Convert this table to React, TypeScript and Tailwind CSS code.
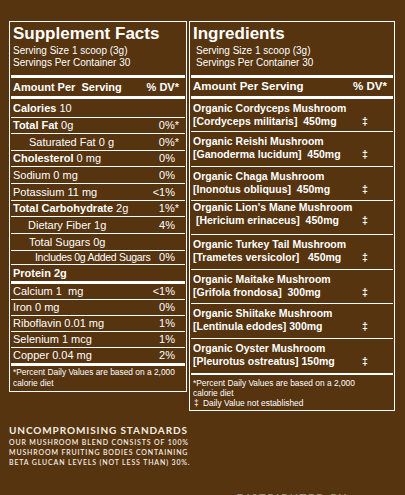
import React from "react";

const sans = "font-['Liberation_Sans',Arial,sans-serif]";

type Row = {
  b?: string;
  r?: string;
  dv?: string;
  star?: boolean;
  indent?: string;
  h: string;
  line?: boolean;
};

const macros: Row[] = [
  { b: "Calories", r: " 10", h: "h-[19px]", line: true },
  { b: "Total Fat", r: " 0g", dv: "0%", star: true, h: "h-[16px]", line: true },
  { r: "Saturated Fat 0 g", dv: "0%", star: true, indent: "pl-[16px]", h: "h-[17px]", line: true },
  { b: "Cholesterol", r: " 0 mg", dv: "0%", h: "h-[16px]", line: true },
  { r: "Sodium 0 mg", dv: "0%", h: "h-[17px]", line: true },
  { r: "Potassium 11 mg", dv: "<1%", h: "h-[17px]", line: true },
  { b: "Total Carbohydrate", r: " 2g", dv: "1%", star: true, h: "h-[16px]", line: true },
  { r: "Dietary Fiber 1g", dv: "4%", indent: "pl-[15px]", h: "h-[17px]", line: true },
  { r: "Total Sugars 0g", indent: "pl-[16px]", h: "h-[17px]", line: true },
  { r: "Includes 0g Added Sugars", dv: "0%", indent: "pl-[22px] text-[10.5px] tracking-[-0.3px]", h: "h-[14px]", line: true },
  { b: "Protein 2g", h: "h-[16px]" },
];

const micros: Row[] = [
  { r: "Calcium 1  mg", dv: "<1%", h: "h-[16px]", line: true },
  { r: "Iron 0 mg", dv: "0%", h: "h-[16px]", line: true },
  { r: "Riboflavin 0.01 mg", dv: "1%", h: "h-[16px]", line: true },
  { r: "Selenium 1 mcg", dv: "1%", h: "h-[16px]", line: true },
  { r: "Copper 0.04 mg", dv: "2%", h: "h-[15px]" },
];

const ingredients = [
  { a: "Organic Cordyceps Mushroom", b: "[Cordyceps militaris]  450mg", h: "h-[33px]", pt: "pt-[3px]" },
  { a: "Organic Reishi Mushroom", b: "[Ganoderma lucidum]  450mg", h: "h-[35px]", pt: "pt-[3px]" },
  { a: "Organic Chaga Mushroom", b: "[Inonotus obliquus]  450mg", h: "h-[34px]", pt: "pt-[3px]" },
  { a: "Organic Lion's Mane Mushroom", b: " [Hericium erinaceus]  450mg", h: "h-[34px]", pt: "pt-[0px]" },
  { a: "Organic Turkey Tail Mushroom", b: "[Trametes versicolor]   450mg", h: "h-[35px]", pt: "pt-[3px]" },
  { a: "Organic Maitake Mushroom", b: "[Grifola frondosa]  300mg", h: "h-[34px]", pt: "pt-[3px]" },
  { a: "Organic Shiitake Mushroom", b: "[Lentinula edodes] 300mg", h: "h-[35px]", pt: "pt-[3px]" },
  { a: "Organic Oyster Mushroom", b: "[Pleurotus ostreatus] 150mg", h: "h-[34px]", pt: "pt-[3px]", last: true },
];

const FactRow = ({ row }: { row: Row }) => (
  <div
    className={`flex items-center justify-between pl-[2px] pr-[10px] text-[11px] ${row.h} ${
      row.line ? "border-b border-white" : ""
    }`}
  >
    <span className={`whitespace-pre ${row.indent ?? ""}`}>
      {row.b && <span className="font-bold">{row.b}</span>}
      {row.r}
    </span>
    <span className="whitespace-nowrap">
      {row.dv}
      {row.star && <span className="-mr-[4px]">*</span>}
    </span>
  </div>
);

const Header = ({ title, right }: { title: string; right?: boolean }) => (
  <>
    <div className="px-[2px] text-[17px] font-bold leading-[22px]">{title}</div>
    <div className={`text-[10px] leading-[12px] ${right ? "px-[5px]" : "px-[2px]"}`}>
      <div>Serving Size 1 scoop (3g)</div>
      <div>Servings Per Container 30</div>
    </div>
    <div className="mt-[6px] h-[3px] bg-white" />
    <div
      className={`flex h-[18px] items-center justify-between whitespace-nowrap pl-[2px] font-bold ${
        right ? "pr-[6px] text-[11.5px]" : "pr-[10px] text-[11px]"
      }`}
    >
      <span>{right ? "Amount Per Serving" : "Amount Per\u00a0 Serving"}</span>
      <span className="whitespace-nowrap">
        % DV{right ? "*" : <span className="-mr-[4px]">*</span>}
      </span>
    </div>
    <div className="h-[3px] bg-white" />
  </>
);

export default function App() {
  return (
    <div className={`h-[495px] w-[405px] overflow-hidden bg-[#55340f] pt-[21px] text-white ${sans}`}>
      <div className="flex items-start">
        <div className="ml-[9px] w-[178px]">
          <div className="border border-white p-[1px]">
            <Header title="Supplement Facts" />
            {macros.map((r, i) => (
              <FactRow key={i} row={r} />
            ))}
            <div className="h-[3px] bg-white" />
            {micros.map((r, i) => (
              <FactRow key={i} row={r} />
            ))}
            <div className="h-[3px] bg-white" />
            <div className="px-[2px] pb-[1px] pt-[1px] text-[8.4px] leading-[11px]">
              <div>*Percent Daily Values are based on a 2,000</div>
              <div>calorie diet</div>
            </div>
          </div>

          <div className="mt-[32px] whitespace-nowrap font-['Lato',sans-serif] text-[#f3ece2]">
            <div className="text-[10px] font-bold leading-[12px] tracking-[0.09em]">
              UNCOMPROMISING STANDARDS
            </div>
            <div className="mt-[1px] text-[7px] font-semibold leading-[10px] tracking-[0.12em]">
              <div>OUR MUSHROOM BLEND CONSISTS OF 100%</div>
              <div>MUSHROOM FRUITING BODIES CONTAINING</div>
              <div>BETA GLUCAN LEVELS (NOT LESS THAN) 30%.</div>
            </div>
          </div>
        </div>

        <div className="ml-[2px] w-[206px]">
          <div className="border border-white p-[1px]">
            <Header title="Ingredients" right />
            {ingredients.map((it, i) => (
              <div
                key={i}
                className={`${it.h} ${it.pt} pl-[2px] text-[10.5px] font-bold leading-[13px] ${
                  it.last ? "" : "border-b border-white"
                }`}
              >
                <div className="whitespace-pre">{it.a}</div>
                <div className="flex">
                  <span className="flex-1 whitespace-pre">{it.b}</span>
                  <span className="w-[31px]">‡</span>
                </div>
              </div>
            ))}
            <div className="h-[2px] bg-white" />
            <div className="px-[2px] pb-[1px] pt-[3px] text-[8.4px] leading-[10px]">
              <div>*Percent Daily Values are based on a 2,000</div>
              <div>calorie diet</div>
              <div className="flex">
                <span className="w-[10px] pl-[1px]">‡</span>
                <span>Daily Value not established</span>
              </div>
            </div>
          </div>
          <div className="mt-[80px] text-center font-['Lato',sans-serif] text-[11px] font-bold leading-[13px] tracking-[0.15em] text-[#9a8a76]">
            DISTRIBUTED BY
          </div>
        </div>
      </div>
    </div>
  );
}
